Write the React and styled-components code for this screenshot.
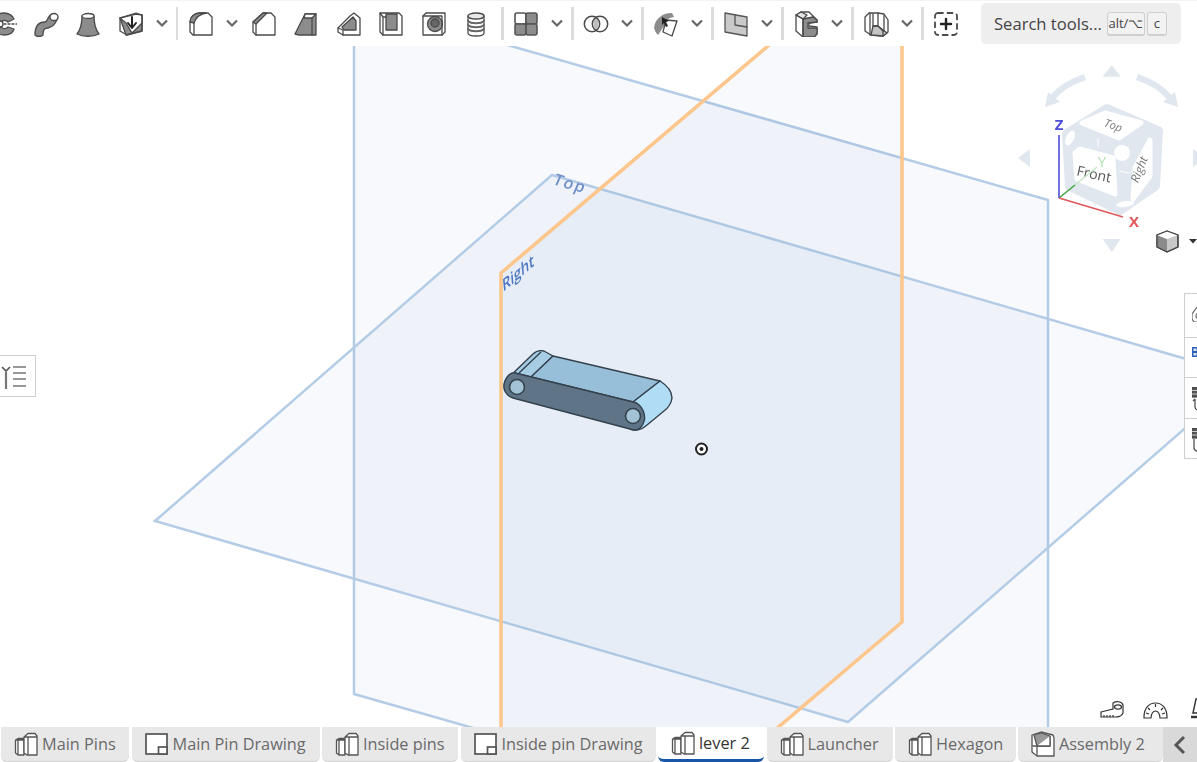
import React from 'react'
import styled, { createGlobalStyle } from 'styled-components'

const Global = createGlobalStyle`
    html, body {
        margin: 0;
        padding: 0;
        background: #fff;
        overflow: hidden;
    }
    * {
        box-sizing: border-box;
    }
`;

const Page = styled.div`
    width: 1197px;
    height: 762px;
    display: flex;
    flex-direction: column;
    font-family: 'Open Sans', sans-serif;
    overflow: hidden;
`;

const Toolbar = styled.div`
    flex: 0 0 46px;
    display: flex;
    align-items: center;
    background: #fff;
    border-top: 1px solid #f4f4f4;
    position: relative;
    z-index: 2;
`;

const Tool = styled.div`
    flex: 0 0 42.4px;
    height: 34px;
    display: flex;
    align-items: center;
    justify-content: center;
    margin-left: ${props => props.$offset || 0}px;
    filter: blur(0.3px);
`;

const Drop = styled.div`
    flex: 0 0 20px;
    display: flex;
    align-items: center;
    justify-content: center;
    margin-right: ${props => props.$after || 0}px;
`;

const Sep = styled.div`
    flex: 0 0 2.5px;
    height: 33px;
    margin: 0 1px 0 4.1px;
    background: #dcdcdc;
`;

const Search = styled.div`
    flex: 0 0 200px;
    height: 41px;
    margin-left: auto;
    margin-right: 16px;
    padding: 0 0 0 13px;
    display: flex;
    align-items: center;
    background: #eeeeee;
    border-radius: 5px;
    color: #444;
    font-size: 16.6px;
    white-space: nowrap;
`;

const Kbd = styled.span`
    flex: 0 0 ${props => props.$w}px;
    height: 24px;
    margin-left: ${props => props.$left}px;
    display: flex;
    align-items: center;
    justify-content: center;
    background: #f2f2f2;
    border: 1px solid #cfcfcf;
    border-bottom-width: 2px;
    border-radius: 3px;
    font-size: 13px;
    color: #444;
`;

const Viewport = styled.div`
    flex: 1;
    position: relative;
    overflow: hidden;
    background: #fff;
`;

const Scene = styled.svg`
    display: block;
    width: 1197px;
    height: 681px;
    filter: blur(0.35px);
`;

const CubeWidget = styled.svg`
    position: absolute;
    top: 9px;
    right: 0;
    width: 187px;
    height: 210px;
    filter: blur(0.35px);
`;

const ListButton = styled.div`
    position: absolute;
    left: -1px;
    top: 309px;
    width: 37px;
    height: 42px;
    display: flex;
    align-items: center;
    background: #fff;
    border: 1px solid #cfcfcf;
`;

const SidePanel = styled.div`
    position: absolute;
    left: 1184px;
    top: 247px;
    width: 30px;
    height: 166px;
    display: flex;
    flex-direction: column;
    background: #fff;
    border: 1px solid #cfcfcf;
`;

const SideRow = styled.div`
    flex: 1;
    display: flex;
    justify-content: flex-start;
    padding: ${props => props.$top}px 0 0 7px;
    border-top: ${props => (props.$first ? 'none' : '1px solid #cfcfcf')};
`;

const MeasureBar = styled.div`
    position: absolute;
    left: 1100px;
    bottom: 8px;
    display: flex;
    align-items: flex-end;
    gap: 19px;
`;

const TabBar = styled.div`
    flex: 0 0 35px;
    display: flex;
    gap: 2.5px;
    padding-left: 1px;
    background: #fff;
    position: relative;
    z-index: 2;
`;

const Tab = styled.div`
    flex: 0 0 ${props => props.$w}px;
    display: flex;
    align-items: center;
    gap: 4px;
    padding-left: 13px;
    background: ${props => (props.$active ? '#fff' : '#e8e8e8')};
    border-bottom: ${props => (props.$active ? '3px solid #1a56a8' : '1px solid #d2d2d2')};
    border-radius: 0 0 6px 6px;
    color: ${props => (props.$active ? '#333' : '#6a6a6a')};
    font-size: 16.3px;
    white-space: nowrap;
`;

const TabScroll = styled.div`
    flex: 1;
    margin-left: -2.5px;
    display: flex;
    align-items: center;
    justify-content: center;
    background: #d9d9d9;
`;

const LINE = '#4a4a4a'
const GREY = '#8c8c8c'
const base = { fill: 'none', stroke: LINE, strokeWidth: 1.3, strokeLinejoin: 'round', strokeLinecap: 'round' }

const Ico = ({ children, w = 26, h = 26 }) => (
    <svg width={w} height={h} viewBox={`0 0 ${w} ${h}`} {...base}>{children}</svg>
)

const Chevron = () => (
    <svg width="14" height="9" viewBox="0 0 14 9" fill="none" stroke="#666" strokeWidth="2.2">
        <path d="M2 1.5 L7 6.5 L12 1.5" />
    </svg>
)

const Revolve = () => (
    <Ico>
        <path fill={GREY} d="M13 2 C18 2 22 5 23 8 L17 11 C15 9 12 9 10 11 L4 6 C6 3 10 2 13 2Z" />
        <path fill={GREY} d="M10 16 C12 18 15 18 17 16 L23 18 C22 22 18 24 13 24 C9 24 6 23 4 20Z" />
        <path strokeDasharray="2 2" d="M13 13 H26" />
        <circle cx="9" cy="13" r="3" fill="#fff" />
    </Ico>
)

const Sweep = () => (
    <Ico>
        <path fill={GREY} d="M2 24 C2 14 6 11 12 11 C15 11 14 4 20 3 L25 7 C22 13 20 16 15 17 C11 17 10 19 10 24 C9 26 3 26 2 24Z" />
        <ellipse cx="21" cy="6" rx="4" ry="3.5" fill="#fff" />
    </Ico>
)

const Loft = () => (
    <Ico>
        <path fill={GREY} d="M7 5 C7 12 6 18 2 23 C8 26 18 26 24 23 C20 18 19 12 19 5Z" />
        <ellipse cx="13" cy="5" rx="6" ry="2.5" fill="#fff" />
    </Ico>
)

const Enclose = () => (
    <Ico>
        <path fill={GREY} d="M2 7 L8 24 L24 20 V4 Z" />
        <path fill="#fff" d="M2 7 L18 3 L24 4 V12 L14 22 L8 12Z" />
        <path d="M2 7 V20 L9 24 L24 20 V4 L18 2 Z" />
        <path stroke="#222" strokeWidth="2" d="M14 6 V15 M10 12 L14 17 L18 12" />
    </Ico>
)

const Fillet = () => (
    <Ico>
        <path fill="#fff" d="M2 11 C2 6 6 2 12 2 H20 L24 6 V24 H5 L2 21Z" />
        <path fill={GREY} d="M2 11 C2 6 6 2 12 2 H18 C12 3 8 6 6 12 Z" />
        <path d="M6 24 V12" />
    </Ico>
)

const Chamfer = () => (
    <Ico>
        <path fill="#fff" d="M2 11 L12 2 H20 L24 6 V24 H5 L2 21Z" />
        <path fill={GREY} d="M2 11 L12 2 H16 L5 13Z" />
        <path d="M5 24 V13" />
    </Ico>
)

const Draft = () => (
    <Ico>
        <path fill={GREY} d="M2 23 L12 3 H23 V24 H6Z" />
        <path fill="#fff" d="M12 3 H23 L19 7 H11Z" />
        <path d="M19 7 V24" />
    </Ico>
)

const Rib = () => (
    <Ico>
        <path fill="#fff" d="M2 17 L14 5 L18 2 L24 7 V24 H7 L2 21Z" />
        <path fill={GREY} d="M6 16 L17 6 L20 10 V19 H8Z" />
        <path d="M7 24 V19 L2 17" />
    </Ico>
)

const Shell = () => (
    <Ico>
        <path fill="#fff" d="M2 2 H21 L24 5 V24 H5 L2 21Z" />
        <rect x="8" y="3" width="11" height="16" fill={GREY} />
        <path d="M5 24 V6 L2 2 M5 6 H8" />
    </Ico>
)

const Hole = () => (
    <Ico>
        <path fill="#fff" d="M2 5 L5 2 H24 V21 L21 24 H2Z" />
        <circle cx="14" cy="13" r="7.5" fill={GREY} />
        <circle cx="14" cy="12" r="4" fill="#666" />
        <path d="M2 5 H21 V24" />
    </Ico>
)

const Thread = () => (
    <Ico>
        <path fill="#fff" d="M5 5 V22 C5 26 21 26 21 22 V5Z" />
        <ellipse cx="13" cy="5" rx="8" ry="3" fill="#e8e8e8" />
        <path stroke="#666" strokeWidth="1.8" d="M5 10 C8 13 18 13 21 10 M5 14 C8 17 18 17 21 14 M5 18 C8 21 18 21 21 18" />
    </Ico>
)

const Split = () => (
    <Ico>
        <rect x="2" y="2" width="11" height="11" rx="2" fill="#fff" stroke="#555" strokeWidth="1.6" />
        <rect x="13" y="2" width="11" height="11" rx="2" fill={GREY} stroke="#555" strokeWidth="1.6" />
        <rect x="2" y="13" width="11" height="11" rx="2" fill={GREY} stroke="#555" strokeWidth="1.6" />
        <rect x="13" y="13" width="11" height="11" rx="2" fill={GREY} stroke="#555" strokeWidth="1.6" />
    </Ico>
)

const Boolean = () => (
    <Ico>
        <path fill="#bdbdbd" stroke="none" d="M13 6.5 C16 9 16 17 13 19.5 C10 17 10 9 13 6.5Z" />
        <circle cx="9" cy="13" r="7.7" strokeWidth="1.5" />
        <circle cx="17" cy="13" r="7.7" strokeWidth="1.5" />
    </Ico>
)

const Transform = () => (
    <Ico>
        <path fill={GREY} stroke="none" d="M1 17 C2 8 9 2 19 2 L21 6 C14 7 11 11 11 15 L5 24 C3 22 2 20 1 17Z" />
        <path fill="#fff" d="M13 9 L24 10 L19 25 L10 21Z" />
        <path fill="#222" stroke="none" d="M9 6 L16 10 L13 11 L15 15 L13 16 L11 12 L9 14Z" />
    </Ico>
)

const Plane = () => (
    <Ico>
        <path fill="#c9c9c9" stroke="#555" d="M2 2 L24 6 V25 L2 21Z" />
        <path stroke="#555" d="M12 4 V14 L24 16" />
    </Ico>
)

const SheetMetal = () => (
    <Ico>
        <path fill="#fff" d="M3 4 L8 1 H16 L20 5 L24 9 V11 L16 12 V15 L24 16 V23 L21 26 H10 L3 20Z" />
        <path fill={GREY} d="M10 8 L20 6 L24 9 V11 L15 12 V17 L24 17 V23 L21 26 H10Z" />
        <path fill="#e6e6e6" d="M3 4 L8 1 L14 4 L10 8Z" />
        <path d="M10 8 V26 M3 4 L10 8" />
    </Ico>
)

const Frame = () => (
    <Ico>
        <path fill="#fff" d="M2 6 L6 2 H15 L21 3 L25 9 V21 L20 25 L8 24 L2 20Z" />
        <path fill="#c4c4c4" d="M10 15 L15 15 L24 22 L20 25 L8 24 Z" />
        <path d="M7 2 V24 M10 3 V15 H15 M15 2 V15 L20 20 V25 M21 4 V20" />
    </Ico>
)

const AddTool = () => (
    <Ico>
        <rect x="2" y="2" width="22" height="22" rx="3" strokeWidth="1.8" strokeDasharray="5 4.5" />
        <path stroke="#222" strokeWidth="2.4" d="M13 8 V18 M8 13 H18" />
    </Ico>
)

const PartIcon = () => (
    <svg width="24" height="24" viewBox="0 0 24 24" fill="#fff" stroke="#555" strokeWidth="1.3" strokeLinejoin="round">
        <path d="M1.5 8 L4 6.5 H10 V23 H4 L1.5 21Z M4 8 H10 M4 8 V23 M1.5 8 H4" />
        <path d="M10 5 L14 1.5 H21 L23 4 V23 H13 L10 21Z M14 5 H23 M14 5 V23 M10 5 H14" />
    </svg>
)

const DrawingIcon = () => (
    <svg width="24" height="22" viewBox="0 0 24 22" fill="#fff" stroke="#555" strokeWidth="1.7">
        <rect x="1" y="1" width="21" height="20" />
        <rect x="13.5" y="14" width="8.5" height="7" />
    </svg>
)

const AssemblyIcon = () => (
    <svg width="24" height="26" viewBox="0 0 24 26" fill="#fff" stroke="#555" strokeWidth="1.3" strokeLinejoin="round">
        <path d="M1 4 L10 1 L22 4 L23 7 V25 H6 L1 21Z" />
        <path fill="#999" d="M3 4 L10 2 L19 5 V15 H6 Z" />
        <path d="M1 15 H6 V25 M6 15 H19 V5" />
    </svg>
)

const ListIcon = () => (
    <svg width="27" height="28" viewBox="0 0 27 28" fill="none" stroke="#777" strokeWidth="1.6">
        <path d="M2 5 L6 9 L10 5" stroke="#555" />
        <path d="M6 10 V27" strokeWidth="2.2" />
        <path d="M13 5 H26 M13 11 H26 M13 17 H26 M13 24 H26" />
    </svg>
)

const TapeIcon = () => (
    <svg width="24" height="18" viewBox="0 0 24 18" fill="#fff" stroke="#333" strokeWidth="1.2">
        <path d="M1 11 L13 8 V2 C16 0 22 0 23 4 V12 C22 15 18 16 16 16 H1Z" />
        <ellipse cx="18" cy="6" rx="3.5" ry="2.2" />
        <path d="M4 16 V14 M7 16 V14 M10 16 V14 M13 16 V14" />
    </svg>
)

const ProtractorIcon = () => (
    <svg width="25" height="17" viewBox="0 0 25 17" fill="#fff" stroke="#333" strokeWidth="1.2">
        <path d="M1 15 C1 6 6 1 12.5 1 C19 1 24 6 24 15 V16 H17 C17 12 15 9 12.5 9 C10 9 8 12 8 16 H1Z" />
        <path d="M5 6 L7 8 M12.5 2 V5 M20 6 L18 8 M3 11 L6 12 M22 11 L19 12" />
    </svg>
)

const RulerIcon = () => (
    <svg width="24" height="21" viewBox="0 0 24 21" fill="none" stroke="#333" strokeWidth="1.4">
        <path d="M6 15 L9 1 H12 L15 15Z" />
        <path strokeWidth="2.4" d="M4 19 H24" />
    </svg>
)

const SideIcon = ({ kind }) => {
    if (kind === 'home') {
        return (
            <svg width="12" height="16" viewBox="0 0 12 16" fill="none" stroke="#666" strokeWidth="1.2">
                <path d="M0 8 L5 1 L12 1 V16 H2 L0 13Z" />
                <circle cx="7" cy="10" r="3" />
            </svg>
        )
    }
    if (kind === 'blue') {
        return (
            <svg width="12" height="10" viewBox="0 0 12 10">
                <rect width="12" height="10" fill="#2f62b8" />
                <rect x="1.5" y="1.5" width="3" height="2.5" fill="#dbe6f6" />
                <rect x="1.5" y="6" width="3" height="2.5" fill="#dbe6f6" />
            </svg>
        )
    }
    return (
        <svg width="12" height="24" viewBox="0 0 12 24" fill="none" stroke="#444" strokeWidth="1.2">
            <rect x="0" y="0" width="6" height="10" fill="#555" />
            <path stroke="#ccc" d="M0 3.5 H6 M0 7 H6" />
            <path d={kind === 'curve' ? 'M1 14 L3 12 M3 12 V20 C3 23 6 24 12 24' : 'M2 11 V20 C2 23 5 24 12 24'} />
        </svg>
    )
}

const PLANE_BLUE = '#b4cce5'
const ORANGE = '#fcc68c'
const PLANE_FILL = 'rgba(40, 100, 170, 0.04)'

const Planes = () => (
    <g>
        <polygon points="354,1 1048,200 1048,892 354,694" fill={PLANE_FILL} stroke={PLANE_BLUE} strokeWidth="2.5" />
        <polygon points="552,175 1245,376 848,722 155,521" fill={PLANE_FILL} stroke={PLANE_BLUE} strokeWidth="2.5" />
        <polygon points="501,273 902,-68 902,622 501,963" fill={PLANE_FILL} stroke={ORANGE} strokeWidth="3.6" />
        <text transform="matrix(0.96 0.28 -0.4 0.92 552 184)" fontFamily="'Open Sans', sans-serif" fontSize="16" fontWeight="600" fill="#6f8fc9" letterSpacing="1.5">Top</text>
        <text transform="matrix(0.76 -0.65 0.1 1 503 292)" fontFamily="'Open Sans', sans-serif" fontSize="16.5" fontWeight="600" fill="#4f78c4">Right</text>
    </g>
)

const Lever = () => (
    <g stroke="#34424e" strokeWidth="1.4" strokeLinejoin="round">
        <path fill="#a6cde4" d="M505 381 L533 354 C536 351 540 350 544 351 L553 356 L531 377 L515 373 C511 372 507 376 505 381Z" />
        <path d="M519 373 L541 352" />
        <path fill="#98bfd9" d="M531 377 L553 356 L660 381 L633 402Z" />
        <path fill="#b0dcf5" d="M633 402 L660 381 C668 386 672 392 672 398 C671 405 668 408 664 411 L647 425 C640 431 635 431 630 429 C645 425 645 404 633 402Z" />
        <path fill="#5f7587" d="M515 373 L633 402 C643 404 647 417 643 424 C640 430 635 431 630 429 L513 398 C505 395 502 388 505 381 C507 376 511 372 515 373Z" />
        <ellipse cx="517" cy="387" rx="7.5" ry="7.5" fill="#a3c2d6" strokeWidth="1.6" />
        <ellipse cx="633" cy="416" rx="7.5" ry="7.5" fill="#a3c2d6" strokeWidth="1.6" />
    </g>
)

const OriginMark = () => (
    <g>
        <circle cx="701.5" cy="449" r="5.5" fill="#fff" stroke="#222" strokeWidth="2" />
        <circle cx="701.5" cy="449" r="2" fill="#222" />
    </g>
)

const CUBE = '#e0e7ee'

const Cube = () => (
    <CubeWidget viewBox="0 0 187 210">
        <g fill={CUBE}>
            <polygon points="101.7,10 92.7,21.7 110.7,21.7" />
            <polygon points="20,94 20,112 8,103" />
            <polygon points="183,94 183,112 195,103" />
            <polygon points="92.7,184 110.7,184 101.7,197" />
            <polygon points="35,52 38,37 50,47" />
            <polygon points="168,52 165,37 153,47" />
        </g>
        <path d="M75 22 C60 27 50 33 42 43 M127 22 C142 27 152 33 160 43" fill="none" stroke={CUBE} strokeWidth="6.5" />
        <path d="M97 54 L148 76 L145 131 L110 155 L60 131 L57 79Z" fill={CUBE} stroke={CUBE} strokeWidth="10" strokeLinejoin="round" />
        <g fill="#fff" stroke="#fff" strokeWidth="5" strokeLinejoin="round">
            <path d="M72 68 L95 58 L131 68 L109 83Z" />
            <path d="M65 98 L70 94 L103 103 L105 139 L67 124Z" />
            <path d="M125 113 L140 85 L140 121 L123 144Z" />
        </g>
        <g fill="#fff">
            <circle cx="112" cy="98" r="8" />
            <ellipse cx="60" cy="83" rx="4" ry="8" transform="rotate(25 60 83)" />
            <ellipse cx="115" cy="149" rx="9" ry="3" transform="rotate(-8 115 149)" />
        </g>
        <path d="M88 84 V92 M109 116 L120 118" stroke="#fff" strokeWidth="1" />
        <g fontFamily="'Open Sans', sans-serif" fill="#777" textAnchor="middle">
            <text x="0" y="0" fontSize="11" fontStyle="italic" transform="translate(102 74) rotate(20)">Top</text>
            <text x="0" y="0" fontSize="14" fill="#555" transform="translate(83 124) rotate(12)">Front</text>
            <text x="0" y="0" fontSize="12" fontStyle="italic" transform="translate(133 116) rotate(-68)">Right</text>
        </g>
        <path d="M49 143 L87 112" stroke="#c5e8c5" strokeWidth="1.3" />
        <path d="M49 143 L65 130" stroke="#4aa64a" strokeWidth="1.5" />
        <path d="M49 143 V80" stroke="#4d4dd8" strokeWidth="1.6" />
        <path d="M49 143 L113 162" stroke="#e0585a" strokeWidth="1.6" />
        <g fontFamily="'Open Sans', sans-serif" fontWeight="700" fontSize="15" textAnchor="middle">
            <text x="49" y="75" fill="#4d4dd8">Z</text>
            <text x="124" y="172" fill="#e0585a">X</text>
            <text x="92" y="112" fill="#b4e0b4" fontWeight="400">Y</text>
        </g>
        <g stroke="#444" strokeWidth="1.2" strokeLinejoin="round">
            <path d="M147 180 L157 176 L168 180 V192 L157 197 L147 192Z" fill="#c8c8c8" />
            <path d="M147 180 L157 184 V197 L147 192Z" fill="#8a8a8a" stroke="none" />
            <path d="M147 180 L157 176 L168 180 L157 184Z" fill="#fff" stroke="none" />
            <path d="M147 180 L157 176 L168 180 V192 L157 197 L147 192Z" fill="none" />
        </g>
        <polygon points="179,184 187,184 183,188.5" fill="#333" />
    </CubeWidget>
)

const tabs = [
    { name: 'Main Pins', icon: PartIcon, w: 128 },
    { name: 'Main Pin Drawing', icon: DrawingIcon, w: 188 },
    { name: 'Inside pins', icon: PartIcon, w: 136 },
    { name: 'Inside pin Drawing', icon: DrawingIcon, w: 195 },
    { name: 'lever 2', icon: PartIcon, w: 106, active: true },
    { name: 'Launcher', icon: PartIcon, w: 126 },
    { name: 'Hexagon', icon: PartIcon, w: 120.5 },
    { name: 'Assembly 2', icon: AssemblyIcon, w: 145 },
]

const Tools = () => (
    <Toolbar>
        <Tool $offset={-17.7}><Revolve /></Tool>
        <Tool><Sweep /></Tool>
        <Tool><Loft /></Tool>
        <Tool><Enclose /></Tool>
        <Drop><Chevron /></Drop>
        <Sep />
        <Tool><Fillet /></Tool>
        <Drop $after={1}><Chevron /></Drop>
        <Tool><Chamfer /></Tool>
        <Tool><Draft /></Tool>
        <Tool><Rib /></Tool>
        <Tool><Shell /></Tool>
        <Tool><Hole /></Tool>
        <Tool><Thread /></Tool>
        <Sep />
        <Tool><Split /></Tool>
        <Drop><Chevron /></Drop>
        <Sep />
        <Tool><Boolean /></Tool>
        <Drop><Chevron /></Drop>
        <Sep />
        <Tool><Transform /></Tool>
        <Drop><Chevron /></Drop>
        <Sep />
        <Tool><Plane /></Tool>
        <Drop><Chevron /></Drop>
        <Sep />
        <Tool><SheetMetal /></Tool>
        <Drop><Chevron /></Drop>
        <Sep />
        <Tool><Frame /></Tool>
        <Drop><Chevron /></Drop>
        <Sep />
        <Tool><AddTool /></Tool>
        <Search>
            Search tools...
            <Kbd $w={38} $left={5}>alt/⌥</Kbd>
            <Kbd $w={20} $left={2}>c</Kbd>
        </Search>
    </Toolbar>
)

export default function App() {
    return (
        <Page>
            <Global />
            <Tools />
            <Viewport>
                <Scene viewBox="0 46 1197 681">
                    <Planes />
                    <Lever />
                    <OriginMark />
                </Scene>
                <Cube />
                <ListButton><ListIcon /></ListButton>
                <SidePanel>
                    <SideRow $first $top={12}><SideIcon kind="home" /></SideRow>
                    <SideRow $top={9}><SideIcon kind="blue" /></SideRow>
                    <SideRow $top={9}><SideIcon kind="curve" /></SideRow>
                    <SideRow $top={9}><SideIcon kind="arc" /></SideRow>
                </SidePanel>
                <MeasureBar>
                    <TapeIcon />
                    <ProtractorIcon />
                    <RulerIcon />
                </MeasureBar>
            </Viewport>
            <TabBar>
                {tabs.map(tab => {
                    const Icon = tab.icon
                    return (
                        <Tab key={tab.name} $w={tab.w} $active={tab.active}>
                            <Icon />
                            {tab.name}
                        </Tab>
                    )
                })}
                <TabScroll>
                    <svg width="14" height="20" viewBox="0 0 14 20" fill="none" stroke="#555" strokeWidth="3">
                        <path d="M11 2 L3 10 L11 18" />
                    </svg>
                </TabScroll>
            </TabBar>
        </Page>
    )
}
